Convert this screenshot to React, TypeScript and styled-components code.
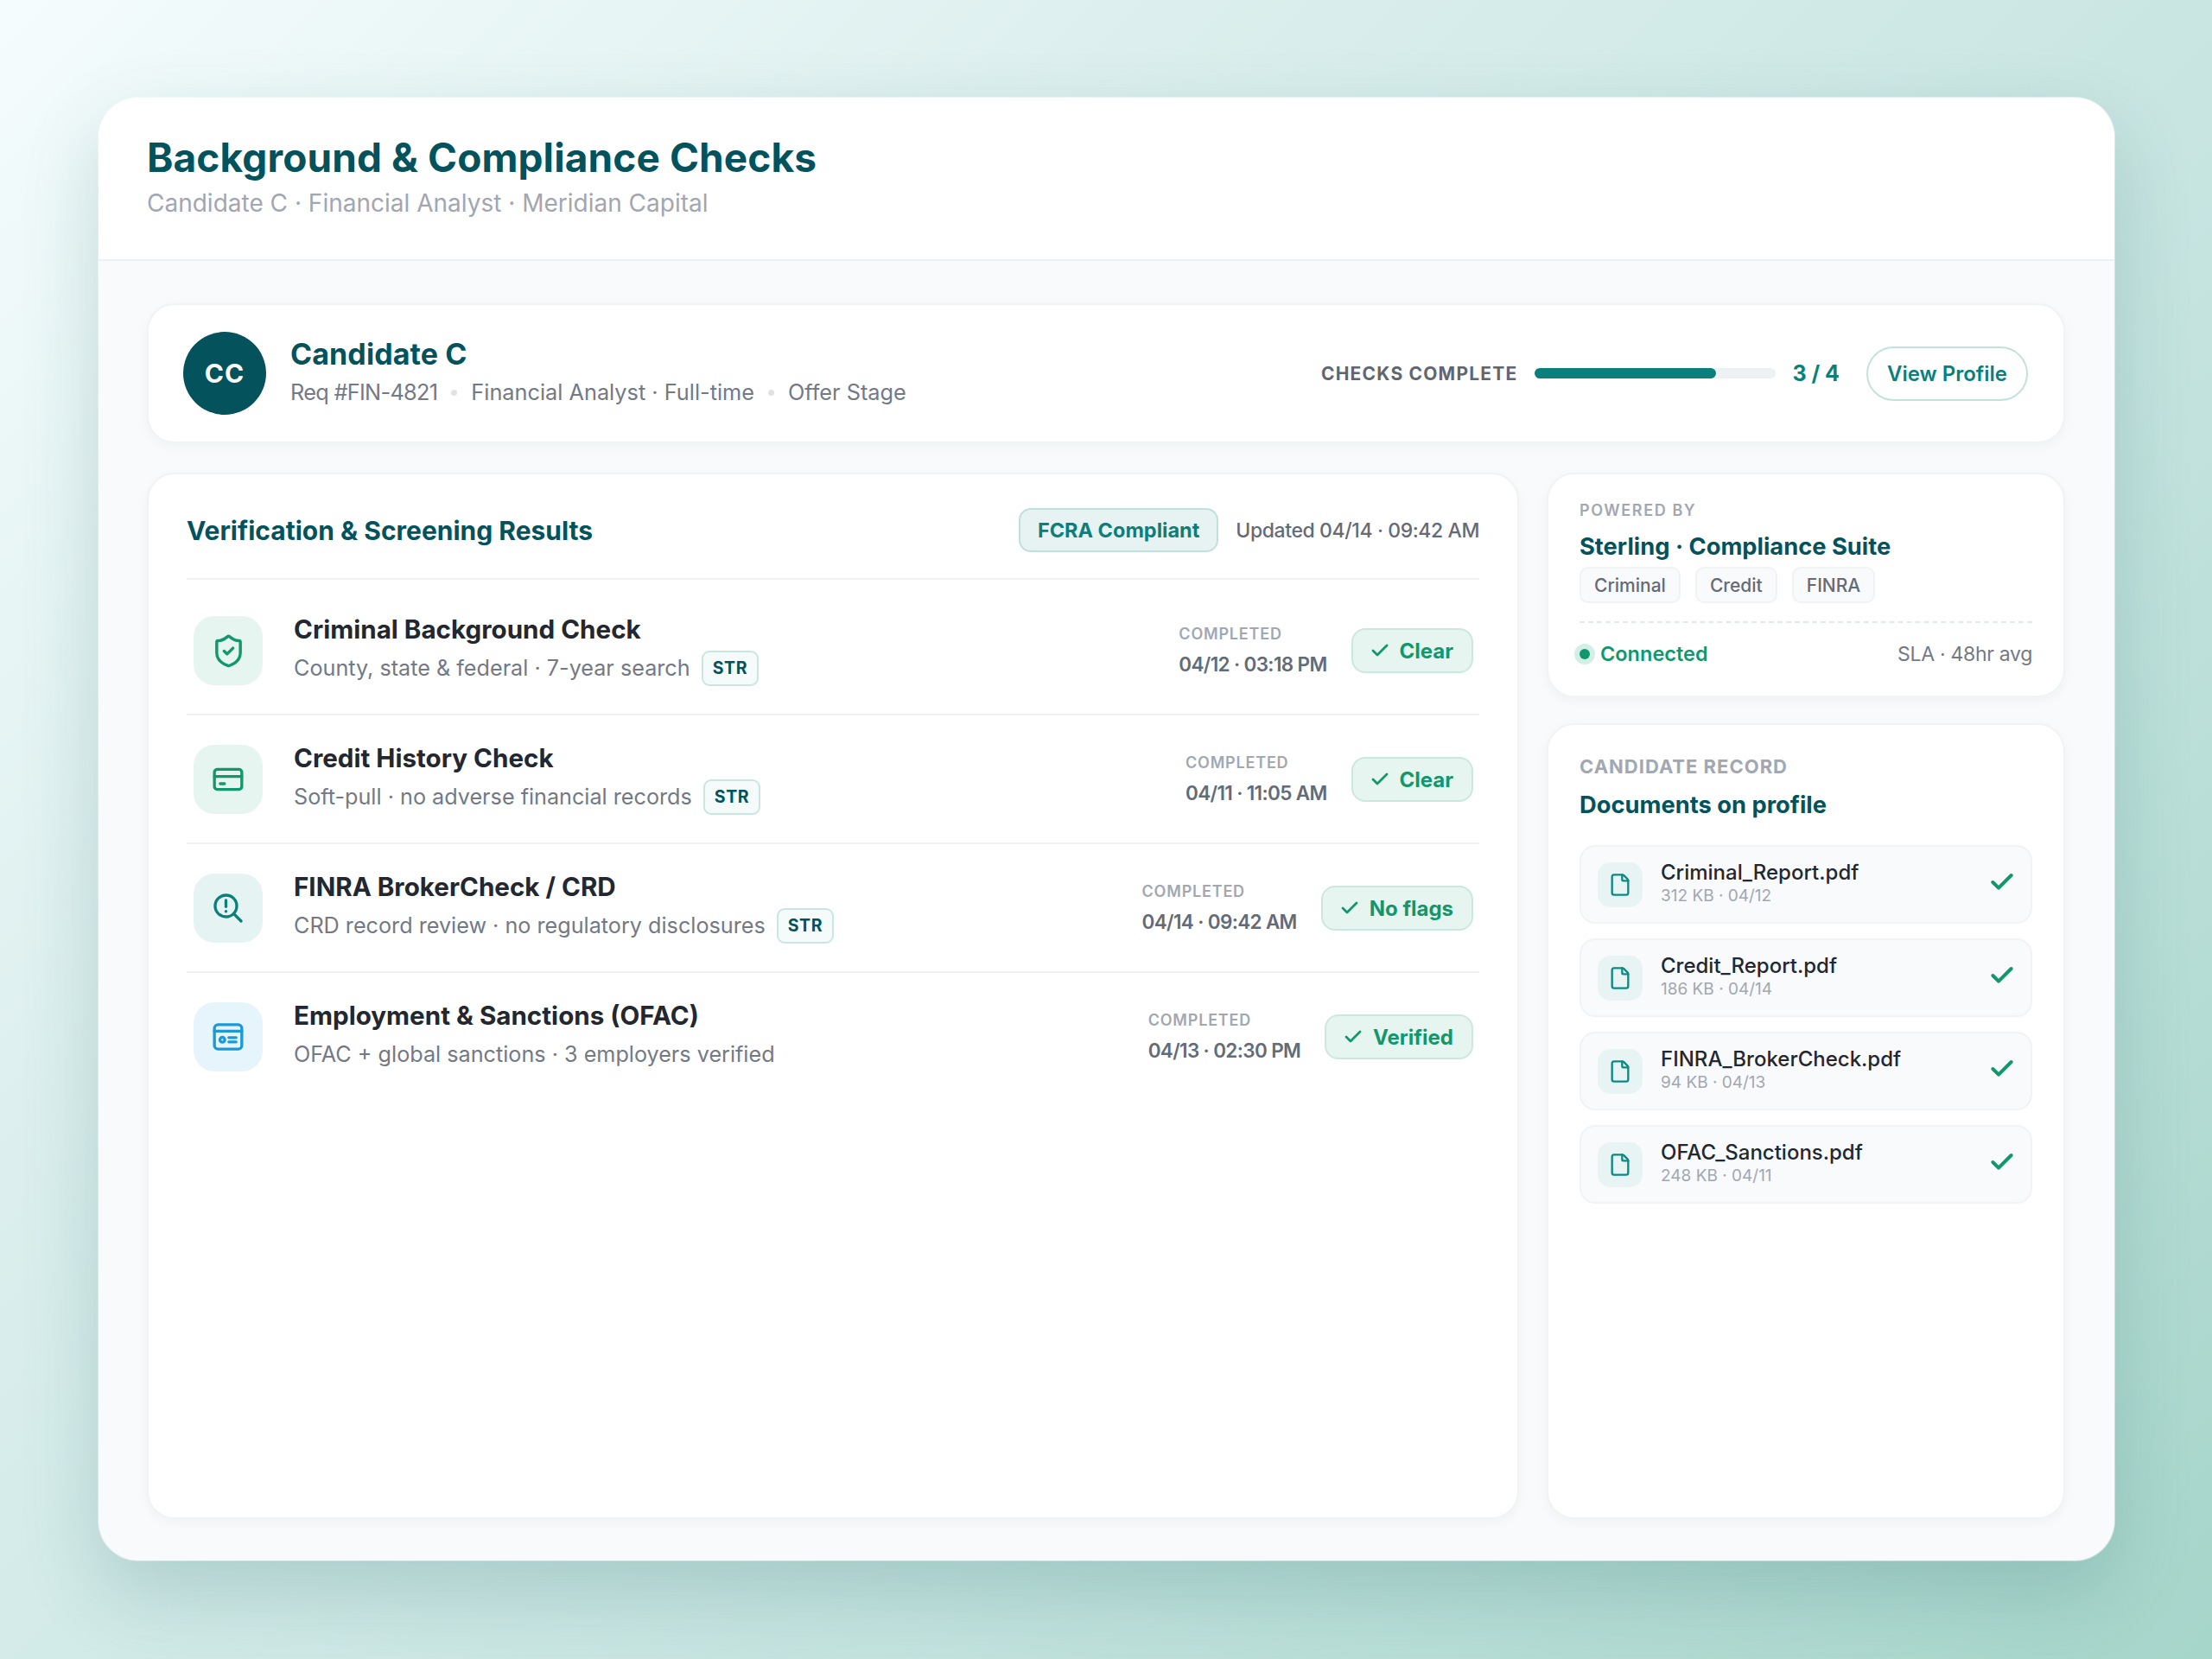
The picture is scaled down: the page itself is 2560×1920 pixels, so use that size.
import { ShieldCheck, File, Check } from 'lucide-react'
import styled, { createGlobalStyle } from 'styled-components'

const GlobalStyle = createGlobalStyle`
  html, body {
    margin: 0;
    padding: 0;
  }
  body {
    font-family: Inter, "Noto Sans", "Liberation Sans", sans-serif;
  }
  * {
    box-sizing: border-box;
  }
`

const Page = styled.div`
  width: 2560px;
  height: 1920px;
  padding: 113px 113px 114px 114px;
  background: linear-gradient(135deg, #f5fcfd 0%, #dcefee 30%, #c4e3df 65%, #a6d5ca 100%);
  display: flex;
`

const Shell = styled.div`
  flex: 1;
  display: flex;
  flex-direction: column;
  background: #f8fafb;
  border-radius: 46px;
  overflow: hidden;
  box-shadow: 0 36px 90px rgba(24, 96, 96, 0.2), 0 0 0 1px rgba(255, 255, 255, 0.6);
`

const Header = styled.header`
  height: 189px;
  padding: 39px 56px 0;
  background: #fff;
  border-bottom: 2px solid #edf0f2;
`

const Title = styled.h1`
  margin: 0;
  font-size: 46px;
  line-height: 60px;
  font-weight: 700;
  letter-spacing: 0.1px;
  color: #04525c;
`

const Subtitle = styled.div`
  margin-top: 5px;
  font-size: 28px;
  line-height: 36px;
  color: #a2a6b2;
`

const Body = styled.main`
  flex: 1;
  padding: 49px 57px 48px 56px;
  display: flex;
  flex-direction: column;
  gap: 34px;
`

const Card = styled.section`
  background: #fff;
  border: 2px solid #f1f3f5;
  border-radius: 32px;
  box-shadow: 0 4px 14px rgba(20, 60, 70, 0.04);
`

const Summary = styled(Card)`
  height: 162px;
  padding: 0 41px 0 40px;
  display: flex;
  align-items: center;
`

const Avatar = styled.div`
  width: 96px;
  height: 96px;
  border-radius: 50%;
  background: #04525c;
  color: #fff;
  font-size: 30px;
  font-weight: 700;
  letter-spacing: 1px;
  display: flex;
  align-items: center;
  justify-content: center;
  flex-shrink: 0;
`

const Identity = styled.div`
  margin-left: 28px;
  padding-bottom: 4px;
  flex: 1;
`

const Name = styled.div`
  font-size: 34px;
  line-height: 44px;
  font-weight: 700;
  letter-spacing: 0.1px;
  color: #04525c;
`

const MetaRow = styled.div`
  margin-top: 4px;
  display: flex;
  align-items: center;
  font-size: 25.3px;
  line-height: 36px;
  color: #737985;
`

const ReqNumber = styled.span`
  letter-spacing: -0.7px;
`

const MetaDot = styled.span`
  width: 7px;
  height: 7px;
  margin: 0 16px;
  border-radius: 50%;
  background: #dfe2e6;
`

const ProgressLabel = styled.div`
  font-size: 21px;
  font-weight: 700;
  letter-spacing: 1.2px;
  color: #5f6672;
`

const ProgressTrack = styled.div`
  width: 279px;
  height: 12px;
  margin-left: 20px;
  border-radius: 6px;
  background: #eef1f3;
`

const ProgressFill = styled.div`
  height: 100%;
  border-radius: 6px;
  background: #0b7f7b;
`

const ProgressCount = styled.div`
  margin-left: 19px;
  font-size: 25px;
  font-weight: 700;
  color: #0b7f7b;
`

const ProfileButton = styled.button`
  width: 187px;
  height: 63px;
  margin-left: 31px;
  padding: 0;
  background: #fff;
  border: 2px solid #c4e2dc;
  border-radius: 32px;
  font: 600 24px Inter, sans-serif;
  color: #0b7f7b;
`

const Columns = styled.div`
  flex: 1;
  display: grid;
  grid-template-columns: 1588px 600px;
  gap: 32px;
`

const ResultsCard = styled(Card)`
  padding: 0 44px;
`

const ResultsHead = styled.div`
  height: 122px;
  padding-top: 9px;
  display: flex;
  align-items: center;
  border-bottom: 2px solid #eff1f3;
`

const CardTitle = styled.h2`
  margin: 0;
  flex: 1;
  font-size: 30px;
  font-weight: 700;
  color: #04525c;
`

const Chip = styled.div`
  height: 51px;
  padding: 0 20px;
  display: flex;
  align-items: center;
  background: #e6f3f2;
  border: 2px solid #c0e1db;
  border-radius: 14px;
  font-size: 23.5px;
  font-weight: 700;
  color: #0b7f7b;
`

const Updated = styled.div`
  margin-left: 20px;
  font-size: 23px;
  letter-spacing: -0.4px;
  font-weight: 500;
  color: #646b77;
`

const List = styled.div`
  padding-top: 8px;
`

const Row = styled.div`
  padding: 34px 7px 33px 8px;
  display: flex;
  align-items: center;
  border-bottom: 2px solid #eff1f3;

  &:last-child {
    border-bottom: none;
  }
`

const Tile = styled.div<{ $tone: 'green' | 'teal' | 'blue' }>`
  width: 80px;
  height: 80px;
  border-radius: 24px;
  flex-shrink: 0;
  display: flex;
  align-items: center;
  justify-content: center;
  background: ${(p) => (p.$tone === 'green' ? '#e6f5f0' : p.$tone === 'teal' ? '#e6f3f3' : '#e6f4fc')};
  color: ${(p) => (p.$tone === 'green' ? '#12976c' : p.$tone === 'teal' ? '#0b7f7b' : '#1a99d6')};
`

const RowText = styled.div`
  margin-left: 36px;
  margin-top: -5px;
  flex: 1;
`

const RowTitle = styled.div`
  font-size: 29.6px;
  line-height: 36px;
  font-weight: 700;
  color: #23272f;
`

const RowSub = styled.div`
  margin-top: 9px;
  display: flex;
  align-items: center;
  height: 36px;
  font-size: 25.2px;
  line-height: 36px;
  color: #737985;
`

const SourceTag = styled.span`
  height: 41px;
  margin-left: 13px;
  padding: 0 11px;
  display: flex;
  align-items: center;
  background: #f4fbfa;
  border: 2px solid #c9e6e1;
  border-radius: 9px;
  font-size: 19.5px;
  font-weight: 700;
  letter-spacing: 0.6px;
  color: #04525c;
`

const Completed = styled.div`
  margin-right: 28px;
`

const CompletedLabel = styled.div`
  font-size: 18px;
  line-height: 24px;
  font-weight: 600;
  letter-spacing: 0.8px;
  color: #a2a7b1;
`

const CompletedTime = styled.div`
  margin-top: 8px;
  font-size: 22.5px;
  line-height: 30px;
  font-weight: 600;
  letter-spacing: -0.65px;
  color: #646b77;
`

const StatusBadge = styled.div`
  height: 52px;
  padding: 0 21px 0 19px;
  display: flex;
  align-items: center;
  gap: 11px;
  background: #e6f5f0;
  border: 2px solid #cbe8dd;
  border-radius: 16px;
  font-size: 24px;
  font-weight: 700;
  color: #12976c;
`

const Side = styled.div`
  display: flex;
  flex-direction: column;
  gap: 30px;
`

const VendorCard = styled(Card)`
  height: 260px;
  padding: 30px 36px 0;
`

const Eyebrow = styled.div`
  font-size: 18px;
  line-height: 24px;
  font-weight: 600;
  letter-spacing: 1.6px;
  color: #a2a7b1;
`

const SideTitle = styled.div`
  margin-top: 11px;
  font-size: 27.3px;
  line-height: 38px;
  font-weight: 700;
  color: #04525c;
`

const Tags = styled.div`
  margin-top: 4px;
  display: flex;
  gap: 17px;
`

const Tag = styled.div`
  height: 42px;
  padding: 0 15px;
  display: flex;
  align-items: center;
  background: #f8fafb;
  border: 2px solid #f0f2f4;
  border-radius: 10px;
  font-size: 21px;
  font-weight: 500;
  color: #646b77;
`

const VendorStatus = styled.div`
  margin-top: 21px;
  padding-top: 21px;
  display: flex;
  align-items: center;
  justify-content: space-between;
  border-top: 2px dashed #e5e8eb;
`

const Connected = styled.div`
  display: flex;
  align-items: center;
  gap: 6px;
  font-size: 23.5px;
  font-weight: 600;
  color: #12976c;
`

const StatusDot = styled.span`
  width: 12px;
  height: 12px;
  margin-right: 6px;
  border-radius: 50%;
  background: #12976c;
  box-shadow: 0 0 0 6px #d3efe5;
`

const Sla = styled.div`
  font-size: 23px;
  letter-spacing: -0.3px;
  color: #737985;
`

const DocsCard = styled(Card)`
  flex: 1;
  padding: 33px 36px 0;
`

const DocsEyebrow = styled.div`
  font-size: 22px;
  line-height: 30px;
  font-weight: 700;
  letter-spacing: 1px;
  color: #a2a7b1;
`

const DocList = styled.div`
  margin-top: 27px;
  display: flex;
  flex-direction: column;
  gap: 17px;
`

const DocRow = styled.div`
  height: 91px;
  padding: 0 17px 0 19px;
  display: flex;
  align-items: center;
  background: #f8fafb;
  border: 2px solid #f1f3f5;
  border-radius: 18px;
  color: #12976c;
`

const DocTile = styled.div`
  width: 52px;
  height: 52px;
  border-radius: 15px;
  background: #e8f4f3;
  color: #0b8a84;
  flex-shrink: 0;
  display: flex;
  align-items: center;
  justify-content: center;
`

const DocText = styled.div`
  margin-left: 21px;
  margin-top: -3px;
  flex: 1;
`

const DocName = styled.div`
  font-size: 24px;
  line-height: 30px;
  font-weight: 500;
  color: #23272f;
`

const DocMeta = styled.div`
  font-size: 19px;
  line-height: 24px;
  color: #a2a7b1;
`

const DocCheck = styled(Check)`
  margin-top: -5px;
`

const CardIcon = () => (
  <svg width="40" height="40" viewBox="0 0 24 24" fill="none" stroke="currentColor" strokeWidth="2" strokeLinecap="round" strokeLinejoin="round">
    <rect x="2.5" y="5" width="19" height="14" rx="2" />
    <path d="M2.5 10h19" />
    <path d="M6.5 15h3" />
  </svg>
)

const SearchAlertIcon = () => (
  <svg width="40" height="40" viewBox="0 0 24 24" fill="none" stroke="currentColor" strokeWidth="2" strokeLinecap="round" strokeLinejoin="round">
    <circle cx="10.5" cy="10.5" r="7.5" />
    <path d="M16 16l5 5" />
    <path d="M10.5 6.5v4.5" />
    <path d="M10.5 14.2v.1" />
  </svg>
)

const IdIcon = () => (
  <svg width="40" height="40" viewBox="0 0 24 24" fill="none" stroke="currentColor" strokeWidth="2" strokeLinecap="round" strokeLinejoin="round">
    <rect x="2.5" y="3.5" width="19" height="17" rx="2.5" />
    <path d="M2.5 8h19" />
    <circle cx="8" cy="14" r="1.7" />
    <path d="M12.5 12.5h5" />
    <path d="M12.5 15.5h5" />
  </svg>
)

const checks = [
  { title: 'Criminal Background Check', sub: 'County, state & federal · 7-year search', tag: true, time: '04/12 · 03:18 PM', status: 'Clear', tone: 'green' as const, icon: <ShieldCheck size={41} strokeWidth={2} /> },
  { title: 'Credit History Check', sub: 'Soft-pull · no adverse financial records', tag: true, time: '04/11 · 11:05 AM', status: 'Clear', tone: 'green' as const, icon: <CardIcon /> },
  { title: 'FINRA BrokerCheck / CRD', sub: 'CRD record review · no regulatory disclosures', tag: true, time: '04/14 · 09:42 AM', status: 'No flags', tone: 'teal' as const, icon: <SearchAlertIcon /> },
  { title: 'Employment & Sanctions (OFAC)', sub: 'OFAC + global sanctions · 3 employers verified', tag: false, time: '04/13 · 02:30 PM', status: 'Verified', tone: 'blue' as const, icon: <IdIcon /> },
]

const docs = [
  { name: 'Criminal_Report.pdf', meta: '312 KB · 04/12' },
  { name: 'Credit_Report.pdf', meta: '186 KB · 04/14' },
  { name: 'FINRA_BrokerCheck.pdf', meta: '94 KB · 04/13' },
  { name: 'OFAC_Sanctions.pdf', meta: '248 KB · 04/11' },
]

export default function App() {
  return (
    <Page>
      <GlobalStyle />
      <Shell>
        <Header>
          <Title>Background &amp; Compliance Checks</Title>
          <Subtitle>Candidate C · Financial Analyst · Meridian Capital</Subtitle>
        </Header>
        <Body>
          <Summary>
            <Avatar>CC</Avatar>
            <Identity>
              <Name>Candidate C</Name>
              <MetaRow>
                <ReqNumber>Req #FIN-4821</ReqNumber>
                <MetaDot />
                Financial Analyst · Full-time
                <MetaDot />
                Offer Stage
              </MetaRow>
            </Identity>
            <ProgressLabel>CHECKS COMPLETE</ProgressLabel>
            <ProgressTrack>
              <ProgressFill style={{ width: '75%' }} />
            </ProgressTrack>
            <ProgressCount>3 / 4</ProgressCount>
            <ProfileButton>View Profile</ProfileButton>
          </Summary>
          <Columns>
            <ResultsCard>
              <ResultsHead>
                <CardTitle>Verification &amp; Screening Results</CardTitle>
                <Chip>FCRA Compliant</Chip>
                <Updated>Updated 04/14 · 09:42 AM</Updated>
              </ResultsHead>
              <List>
                {checks.map((c) => (
                  <Row key={c.title}>
                    <Tile $tone={c.tone}>{c.icon}</Tile>
                    <RowText>
                      <RowTitle>{c.title}</RowTitle>
                      <RowSub>
                        {c.sub}
                        {c.tag && <SourceTag>STR</SourceTag>}
                      </RowSub>
                    </RowText>
                    <Completed>
                      <CompletedLabel>COMPLETED</CompletedLabel>
                      <CompletedTime>{c.time}</CompletedTime>
                    </Completed>
                    <StatusBadge>
                      <Check size={24} strokeWidth={2.8} />
                      {c.status}
                    </StatusBadge>
                  </Row>
                ))}
              </List>
            </ResultsCard>
            <Side>
              <VendorCard>
                <Eyebrow>POWERED BY</Eyebrow>
                <SideTitle>Sterling · Compliance Suite</SideTitle>
                <Tags>
                  <Tag>Criminal</Tag>
                  <Tag>Credit</Tag>
                  <Tag>FINRA</Tag>
                </Tags>
                <VendorStatus>
                  <Connected>
                    <StatusDot />
                    Connected
                  </Connected>
                  <Sla>SLA · 48hr avg</Sla>
                </VendorStatus>
              </VendorCard>
              <DocsCard>
                <DocsEyebrow>CANDIDATE RECORD</DocsEyebrow>
                <SideTitle>Documents on profile</SideTitle>
                <DocList>
                  {docs.map((d) => (
                    <DocRow key={d.name}>
                      <DocTile>
                        <File size={28} strokeWidth={2} />
                      </DocTile>
                      <DocText>
                        <DocName>{d.name}</DocName>
                        <DocMeta>{d.meta}</DocMeta>
                      </DocText>
                      <DocCheck size={32} strokeWidth={3} />
                    </DocRow>
                  ))}
                </DocList>
              </DocsCard>
            </Side>
          </Columns>
        </Body>
      </Shell>
    </Page>
  )
}
